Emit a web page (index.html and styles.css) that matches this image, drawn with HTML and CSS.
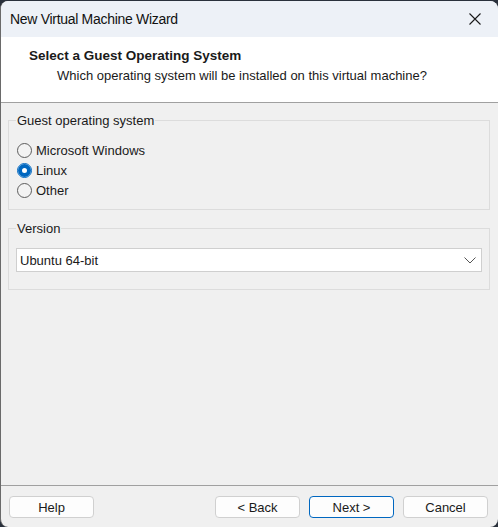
FILE: index.html
```html
<!DOCTYPE html>
<html lang="en">
<head>
<meta charset="utf-8">
<title>New Virtual Machine Wizard</title>
<link rel="stylesheet" href="styles.css">
</head>
<body>
<div class="window">
  <div class="titlebar">
    <span class="title">New Virtual Machine Wizard</span>
    <button class="close" aria-label="Close">
      <svg width="12" height="12" viewBox="0 0 12 12"><path d="M0.5 0.5 L11.5 11.5 M11.5 0.5 L0.5 11.5" stroke="#1a1a1a" stroke-width="1.1" fill="none"/></svg>
    </button>
  </div>
  <div class="header">
    <div class="h-title">Select a Guest Operating System</div>
    <div class="h-sub">Which operating system will be installed on this virtual machine?</div>
  </div>
  <div class="content">
    <fieldset class="group">
      <legend>Guest operating system</legend>
      <div class="radios">
        <label class="radio"><span class="dot"></span>Microsoft Windows</label>
        <label class="radio checked"><span class="dot"></span>Linux</label>
        <label class="radio"><span class="dot"></span>Other</label>
      </div>
    </fieldset>
    <fieldset class="group version">
      <legend>Version</legend>
      <div class="combo">
        <span>Ubuntu 64-bit</span>
        <svg width="12" height="7" viewBox="0 0 12 7"><path d="M0.5 0.5 L6 6 L11.5 0.5" stroke="#555" stroke-width="1" fill="none"/></svg>
      </div>
    </fieldset>
  </div>
  <div class="footer">
    <button class="btn">Help</button>
    <div class="spacer"></div>
    <button class="btn">&lt; Back</button>
    <button class="btn primary">Next &gt;</button>
    <button class="btn">Cancel</button>
  </div>
</div>
</body>
</html>
```
FILE: styles.css
```css
html, body {
  margin: 0;
  padding: 0;
}
body {
  width: 498px;
  height: 527px;
  background: #2a313c;
  overflow: hidden;
  font-family: "Segoe UI", "Liberation Sans", Arial, sans-serif;
  font-size: 13px;
  color: #1a1a1a;
}
.window {
  margin-top: 1px;
  height: 526px;
  display: flex;
  flex-direction: column;
  border-radius: 8px;
  border-left: 1px solid #6a6a6a;
  overflow: hidden;
  background: #f0f0f0;
}
.titlebar {
  height: 36px;
  flex: none;
  display: flex;
  align-items: center;
  background: #edf1f7;
  padding-left: 9px;
}
.title {
  font-size: 14px;
  letter-spacing: -0.3px;
  color: #111;
}
.close {
  margin-left: auto;
  width: 46px;
  height: 36px;
  border: none;
  background: transparent;
  padding: 0 15px 0 14px;
  display: flex;
  align-items: center;
  justify-content: center;
}
.header {
  height: 65px;
  flex: none;
  background: #ffffff;
  padding: 11px 0 0 28px;
  box-sizing: border-box;
}
.h-title {
  font-weight: bold;
  font-size: 13.5px;
  line-height: 15px;
}
.h-sub {
  margin-top: 5px;
  padding-left: 28px;
  line-height: 15px;
}
.content {
  flex: 1;
  border-top: 1px solid #a0a0a0;
  padding: 0 8px 0 7px;
}
.group {
  margin: 10px 0 0 0;
  border: 1px solid #dcdcdc;
  padding: 0 7px 9px 7px;
}
.group legend {
  padding: 0 1px;
  line-height: 15px;
}
.radios {
  margin-top: 12px;
  display: flex;
  flex-direction: column;
}
.radio {
  height: 20px;
  display: flex;
  align-items: center;
  gap: 4px;
}
.dot {
  width: 13px;
  height: 13px;
  border-radius: 50%;
  border: 1px solid #5c5c5c;
  background: #f3f3f3;
  margin-left: 1px;
  flex: none;
}
.radio.checked .dot {
  border-color: #0067c0;
  background: #fff;
  box-shadow: inset 0 0 0 4px #0067c0;
}
.version {
  margin-top: 11px;
  padding-bottom: 17px;
}
.combo {
  margin-top: 12px;
  height: 24px;
  box-sizing: border-box;
  border: 1px solid #cfcfcf;
  background: #ffffff;
  display: flex;
  align-items: center;
  padding: 0 5px 0 3px;
  justify-content: space-between;
}
.footer {
  flex: none;
  height: 42px;
  border-top: 1px solid #a0a0a0;
  box-sizing: border-box;
  display: flex;
  align-items: flex-start;
  padding: 10px 10px 0 8px;
  gap: 9px;
}
.spacer {
  flex: 1;
}
.btn {
  width: 85px;
  height: 22px;
  border: 1px solid #d0d0d0;
  border-radius: 4px;
  background: #fdfdfd;
  font-family: inherit;
  font-size: 13px;
  color: #1a1a1a;
  padding: 0;
}
.btn.primary {
  border-color: #0067c0;
}
```
